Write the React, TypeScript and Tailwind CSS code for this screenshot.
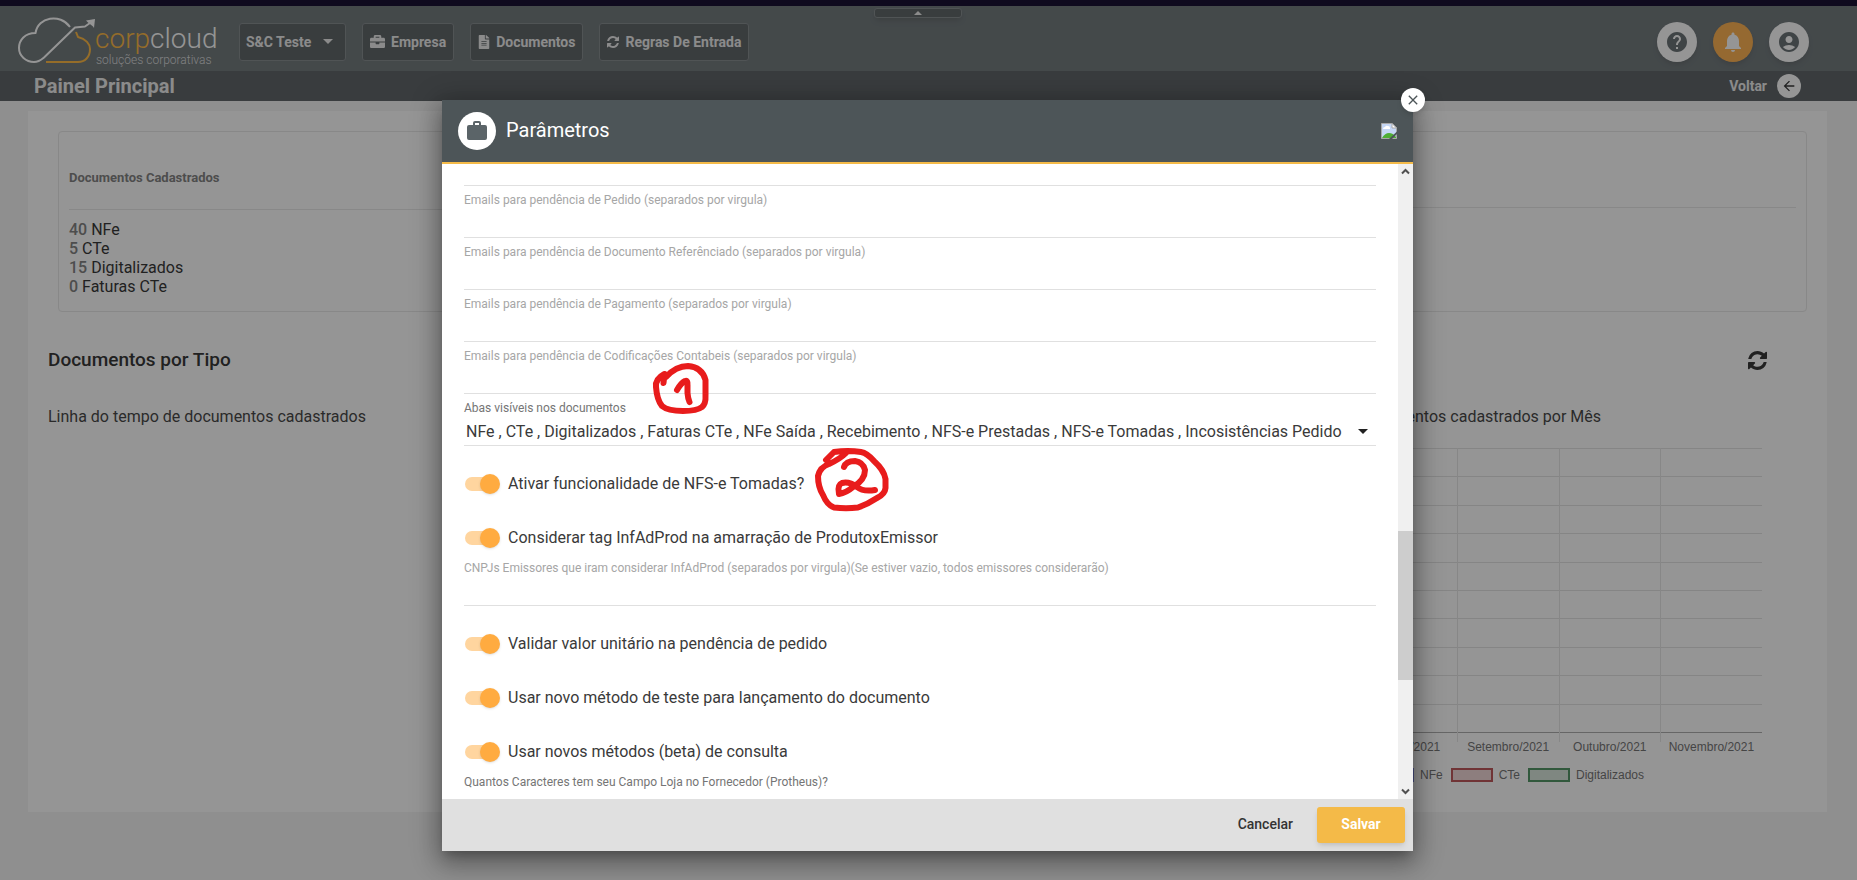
import React, { useState } from "react";
import { FaBriefcase, FaFileAlt } from "react-icons/fa";
import { MdAccountCircle, MdArrowBack, MdClose, MdHelp, MdNotifications } from "react-icons/md";

function RefreshIcon({ className }: { className: string }) {
  return (
    <svg viewBox="0 0 1536 1536" className={className} fill="currentColor" aria-hidden="true">
      <path d="M1511 928q0 5-1 7-64 268-268 434.500t-478 166.500q-146 0-282.500-55t-243.500-157l-129 129q-19 19-45 19t-45-19-19-45v-448q0-26 19-45t45-19h448q26 0 45 19t19 45-19 45l-137 137q71 66 161 102t187 36q134 0 250-65t186-179q11-17 53-117 8-23 30-23h192q13 0 22.500 9.500t9.500 22.500zm25-800v448q0 26-19 45t-45 19h-448q-26 0-45-19t-19-45 19-45l138-138q-148-137-349-137-134 0-250 65t-186 179q-11 17-53 117-8 23-30 23h-199q-13 0-22.500-9.500t-9.500-22.500v-7q65-268 270-434.500t480-166.500q146 0 284 55.500t245 156.500l130-129q19-19 45-19t45 19 19 45z" />
    </svg>
  );
}

function SuitcaseIcon() {
  return (
    <svg viewBox="0 0 24 24" className="size-6" fill="currentColor" aria-hidden="true">
      <path fillRule="evenodd" d="M10 2h4a2 2 0 0 1 2 2v2h4a2 2 0 0 1 2 2v11a2 2 0 0 1-2 2H4a2 2 0 0 1-2-2V8a2 2 0 0 1 2-2h4V4a2 2 0 0 1 2-2zm0 2v2h4V4z" />
    </svg>
  );
}

function Logo() {
  return (
    <svg viewBox="0 0 202 52" className="h-[52px] w-[202px] shrink-0" role="img" aria-label="corpcloud soluções corporativas">
      <g fill="none" strokeWidth="2" strokeLinejoin="round">
        <path stroke="#fff" d="M53 11C43 -3 21 1 18.500 17C8 17 2 24 2 32C2 40 9 46 17 46C22 46 24 44 27 41.500L58 11.500L68 10.500L76.500 4.500" />
        <path stroke="#ffb330" d="M59 16L61 21C69 23 73 28 73 33C73 41 68 46 61 46H29" />
      </g>
      <path fill="#fff" d="M78 3L69 4.500L71 6.500L76 10.500L77 12z" />
      <text x="78" y="32" className="font-['Roboto'] text-[28px] font-light" fill="#fff">
        <tspan fill="#ffb330">corp</tspan>
        <tspan>cloud</tspan>
      </text>
      <text x="79" y="48" className="font-['Roboto'] text-[12px] font-light" fill="#d8dadb">
        soluções corporativas
      </text>
    </svg>
  );
}

const navButton =
  "flex h-[38px] items-center rounded-[3px] border border-[#7b8285] bg-[#4f5659] text-sm font-bold text-[#ececec]";

function Header() {
  return (
    <header className="relative flex h-[65px] items-center bg-[#646d70] pt-1.5 pr-12 pl-[17px]">
      <Logo />
      <nav className="ml-5 flex gap-4">
        <button className={navButton + " w-[107px] px-1.5"}>
          S&amp;C Teste
          <svg viewBox="0 0 10 5" className="ml-3 h-[5px] w-2.5" fill="currentColor" aria-hidden="true">
            <path d="M0 0h10L5 5z" />
          </svg>
        </button>
        <button className={navButton + " gap-1.5 px-[7px]"}>
          <FaBriefcase className="size-[15px]" />
          Empresa
        </button>
        <button className={navButton + " gap-1.5 px-[7px]"}>
          <FaFileAlt className="h-3.5 w-3" />
          Documentos
        </button>
        <button className={navButton + " gap-1.5 px-[7px]"}>
          <RefreshIcon className="size-3" />
          Regras De Entrada
        </button>
      </nav>
      <div className="ml-auto flex gap-4">
        <button aria-label="Ajuda" className="flex size-10 items-center justify-center rounded-full bg-white text-[#5b6468] shadow-md">
          <MdHelp className="size-6" />
        </button>
        <button aria-label="Notificações" className="flex size-10 items-center justify-center rounded-full bg-[#ffab40] text-white shadow-md">
          <MdNotifications className="size-6" />
        </button>
        <button aria-label="Conta" className="flex size-10 items-center justify-center rounded-full bg-white text-[#5b6468] shadow-md">
          <MdAccountCircle className="size-6" />
        </button>
      </div>
      <button
        aria-label="Recolher"
        className="absolute top-0.5 left-1/2 flex h-2.5 w-[88px] -translate-x-[55px] items-center justify-center rounded-[3px] border border-[#7b8285] bg-[#4f5659] text-[#ececec] shadow-md"
      >
        <svg viewBox="0 0 8 4" className="h-1 w-2" fill="currentColor" aria-hidden="true">
          <path d="M0 4h8L4 0z" />
        </svg>
      </button>
    </header>
  );
}

const months = ["Julho/2021", "Agosto/2021", "Setembro/2021", "Outubro/2021", "Novembro/2021"];
const legend = [
  { name: "NFe", style: "border-[#6c78d8] bg-[#dfe2f8]" },
  { name: "CTe", style: "border-[#b8464a] bg-[#f0d4d4]" },
  { name: "Digitalizados", style: "border-[#408a55] bg-[#d5e4d9]" },
];

function MonthChart() {
  return (
    <figure className="ml-auto w-[508px]">
      <svg viewBox="0 0 508 308" className="block h-[308px] w-full" shapeRendering="crispEdges" role="img" aria-label="Documentos por mês">
        {Array.from({ length: 11 }, (_, i) => (
          <line key={i} x1="0" x2="508" y1={1 + Math.round(i * 28.4)} y2={1 + Math.round(i * 28.4)} stroke={i === 10 ? "#a6a6a6" : "#e0e0e0"} />
        ))}
        {months.map((month, i) => (
          <g key={month}>
            <line x1={Math.round(i * 101.6)} x2={Math.round(i * 101.6)} y1="1" y2="295" stroke="#e4e4e4" />
            <text x={i * 101.6 + 51} y="304" textAnchor="middle" className="font-['Liberation_Sans'] text-[12px]" fill="#666">
              {month}
            </text>
          </g>
        ))}
      </svg>
      <figcaption className="mt-3 flex justify-center gap-2 font-['Liberation_Sans'] text-xs text-[#666]">
        {legend.map((item) => (
          <span key={item.name} className="flex items-center gap-1.5">
            <span className={"h-3.5 w-[42px] border-2 " + item.style} />
            {item.name}
          </span>
        ))}
      </figcaption>
    </figure>
  );
}

const totals = [
  ["40", "NFe"],
  ["5", "CTe"],
  ["15", "Digitalizados"],
  ["0", "Faturas CTe"],
];

function Dashboard() {
  return (
    <main className="mt-2.5 mr-[30px] ml-7 h-[701px] bg-white pt-5">
      <section className="mr-5 ml-[30px] flex h-[181px] rounded border border-[#e6e6e6] px-2.5">
        <div className="w-1/2">
          <h2 className="h-[78px] border-b border-[#e6e6e6] pt-9 text-[13px] leading-5 font-bold text-[#757575]">
            Documentos Cadastrados
          </h2>
          <ul className="pt-2.5 text-base leading-[19px] text-[#212121]">
            {totals.map(([count, name]) => (
              <li key={name}>
                <b className="font-medium text-[#757575]">{count}</b> {name}
              </li>
            ))}
          </ul>
        </div>
        <div className="h-[76px] w-1/2 border-b border-[#e6e6e6]" />
      </section>
      <div className="flex items-center justify-between pt-9 pr-[60px] pl-5">
        <h2 className="text-[19px] leading-6 font-medium text-[#212121]">Documentos por Tipo</h2>
        <button aria-label="Atualizar" className="text-[#212121]">
          <RefreshIcon className="size-[19px]" />
        </button>
      </div>
      <div className="flex justify-between pt-[33px] pr-[65px] pl-5 text-base text-[#333]">
        <h3>Linha do tempo de documentos cadastrados</h3>
        <div>
          <h3 className="mb-[18px] pr-[161px] text-right">Quantidade de documentos cadastrados por Mês</h3>
          <MonthChart />
        </div>
      </div>
    </main>
  );
}

function Field({ id, label }: { id: string; label: string }) {
  return (
    <div className="flex flex-col pt-1.5">
      <label htmlFor={id} className="text-xs leading-4 text-[#a6a6a6]">
        {label}
      </label>
      <input id={id} className="h-[30px] border-b border-[#e0e0e0] text-base outline-none" />
    </div>
  );
}

function Toggle({ label }: { label: string }) {
  const [on, setOn] = useState(true);
  return (
    <label className="flex h-6 items-center gap-[9px] text-base text-[#3a3a3a]">
      <input
        type="checkbox"
        role="switch"
        checked={on}
        onChange={() => setOn(!on)}
        className="relative ml-px h-3.5 w-[34px] appearance-none rounded-full bg-[#bdbdbd] before:absolute before:-top-[3px] before:left-0 before:size-5 before:rounded-full before:bg-white before:shadow before:content-[''] checked:bg-[#ffd59f] checked:before:left-[15px] checked:before:bg-[#ffab40]"
      />
      {label}
    </label>
  );
}

function Annotations() {
  return (
    <svg viewBox="0 0 260 160" className="pointer-events-none absolute top-[255px] left-[200px] h-40 w-[260px]" fill="none" stroke="#e81c1c" strokeWidth="6" strokeLinecap="round" strokeLinejoin="round" aria-hidden="true">
      <g transform="translate(-642 -355)">
        <path d="M663.500 383L664.500 374Q655 379 656 387Q657 400 662 406Q668 411 683 411Q697 411 702 407Q706 404 705.500 395V380Q702 367 688 366Q676 366 666 377" />
        <path d="M677 390Q681 383 685 381Q688 380 687.500 385V393Q688 399 689.500 402" />
        <path d="M826 460L834 452Q848 450 861 452Q867 453 874 461Q884 470 885.500 479V488Q885 494 877 498Q868 504 858 507.500Q846 509 834 507.500Q827 505 823 495Q818 487 818 476Q820 467 829 464Q840 459 846 453" />
        <path d="M844 467Q846 461 855 461Q863 462 865 470Q865 480 853 487Q846 493 839 494Q837 485 842 483Q849 481 857 487Q863 492 875 490" />
      </g>
    </svg>
  );
}

function BrokenImage() {
  return (
    <svg viewBox="0 0 16 16" className="size-4" role="img" aria-label="Imagem">
      <path d="M.5.500H11L15.500 5V15.500H.5z" fill="#c5d7f5" stroke="#a8a8a8" />
      <path d="M2 6q0-2 2-2 1-2 3-1 2 0 2 2v1z" fill="#fff" />
      <path d="M1 15q3-5 7-5t7 4v1z" fill="#4fae35" />
      <path d="M11 .500V5h4.500z" fill="#fff" stroke="#a8a8a8" />
      <path d="M8 16L16 8.500V11L11 16z" fill="#4d5558" />
    </svg>
  );
}

function ParametersDialog() {
  return (
    <section
      role="dialog"
      aria-label="Parâmetros"
      className="relative flex h-[calc(100vh-129px)] w-full max-w-[971px] flex-col bg-white shadow-[0_7px_9px_-4px_rgba(0,0,0,0.2),0_14px_21px_2px_rgba(0,0,0,0.14),0_5px_26px_4px_rgba(0,0,0,0.3)]"
    >
      <header className="flex h-16 shrink-0 items-center border-b-2 border-[#f4ba48] bg-[#4d5558] px-4">
        <span className="flex size-[38px] items-center justify-center rounded-full bg-white text-[#5b6468]">
          <SuitcaseIcon />
        </span>
        <h1 className="mr-auto ml-2.5 pb-0.5 text-xl leading-6 text-white">Parâmetros</h1>
        <BrokenImage />
      </header>
      <div className="flex min-h-0 flex-1">
        <div className="min-w-0 flex-1 overflow-hidden px-[22px]">
          <input aria-label="Emails" className="block h-[22px] w-full border-b border-[#e0e0e0] outline-none" />
          <Field id="pedido" label="Emails para pendência de Pedido (separados por virgula)" />
          <Field id="referenciado" label="Emails para pendência de Documento Referênciado (separados por virgula)" />
          <Field id="pagamento" label="Emails para pendência de Pagamento (separados por virgula)" />
          <Field id="codificacoes" label="Emails para pendência de Codificações Contabeis (separados por virgula)" />
          <div className="relative flex flex-col pt-1.5">
            <label htmlFor="abas" className="text-xs leading-4 text-[#757575]">
              Abas visíveis nos documentos
            </label>
            <select id="abas" className="h-[30px] appearance-none border-b border-[#e0e0e0] pt-[3px] pl-0.5 text-base text-[#3a3a3a] outline-none">
              <option>
                NFe , CTe , Digitalizados , Faturas CTe , NFe Saída , Recebimento , NFS-e Prestadas , NFS-e Tomadas , Incosistências Pedido
              </option>
            </select>
            <svg viewBox="0 0 10 5" className="pointer-events-none absolute right-2 bottom-3 h-[5px] w-2.5" fill="#212121" aria-hidden="true">
              <path d="M0 0h10L5 5z" />
            </svg>
          </div>
          <div className="flex flex-col gap-[30px] pt-[26px] pb-1">
            <Toggle label="Ativar funcionalidade de NFS-e Tomadas?" />
            <Toggle label="Considerar tag InfAdProd na amarração de ProdutoxEmissor" />
          </div>
          <Field id="cnpjs" label="CNPJs Emissores que iram considerar InfAdProd (separados por virgula)(Se estiver vazio, todos emissores considerarão)" />
          <div className="flex flex-col gap-[30px] pt-[26px] pb-1">
            <Toggle label="Validar valor unitário na pendência de pedido" />
            <Toggle label="Usar novo método de teste para lançamento do documento" />
            <Toggle label="Usar novos métodos (beta) de consulta" />
          </div>
          <p className="pt-1.5 text-xs leading-4 text-[#757575]">Quantos Caracteres tem seu Campo Loja no Fornecedor (Protheus)?</p>
        </div>
        <div className="flex w-[15px] flex-col items-center bg-[#f0f0f0]" aria-hidden="true">
          <svg viewBox="0 0 15 15" className="size-[15px]" fill="none" stroke="#505050" strokeWidth="2">
            <path d="M4 9.500L7.500 6L11 9.500" />
          </svg>
          <div className="flex w-full flex-1 flex-col">
            <div className="grow-[352]" />
            <div className="grow-[149] bg-[#cdcdcd]" />
            <div className="grow-[104]" />
          </div>
          <svg viewBox="0 0 15 15" className="size-[15px]" fill="none" stroke="#505050" strokeWidth="2">
            <path d="M4 5.500L7.500 9L11 5.500" />
          </svg>
        </div>
      </div>
      <footer className="flex h-[52px] shrink-0 items-center justify-end gap-2 bg-[#e0e0e0] px-2 text-sm">
        <button className="h-9 px-4 pb-0.5 font-medium text-[#333]">Cancelar</button>
        <button className="h-9 w-[88px] rounded-[3px] bg-[#f4ba48] pb-0.5 font-bold text-white shadow-md">Salvar</button>
      </footer>
      <button
        aria-label="Fechar"
        className="absolute -top-3 -right-3 flex size-6 items-center justify-center rounded-full bg-white text-[#4d5558] shadow-md"
      >
        <MdClose className="size-4" />
      </button>
      <Annotations />
    </section>
  );
}

export default function App() {
  return (
    <div className="relative min-h-screen bg-[#0f0a1e] pt-1.5 font-['Roboto',sans-serif]">
      <div className="min-h-[calc(100vh-6px)] bg-[#f4f4f4]">
        <Header />
        <div className="flex h-[30px] items-center justify-between bg-[#4f5558] pr-14 pl-[34px] text-white">
          <h1 className="text-xl leading-6 font-bold text-[#ececec]">Painel Principal</h1>
          <a href="#voltar" className="flex items-center gap-2.5 text-sm font-bold text-[#ececec]">
            Voltar
            <span className="flex size-6 items-center justify-center rounded-full bg-white text-[#212121]">
              <MdArrowBack className="size-4" />
            </span>
          </a>
        </div>
        <Dashboard />
      </div>
      <div className="absolute inset-x-0 top-1.5 bottom-0 flex items-start justify-center overflow-hidden bg-[#212121]/48 pt-[94px] pr-0.5">
        <ParametersDialog />
      </div>
    </div>
  );
}
